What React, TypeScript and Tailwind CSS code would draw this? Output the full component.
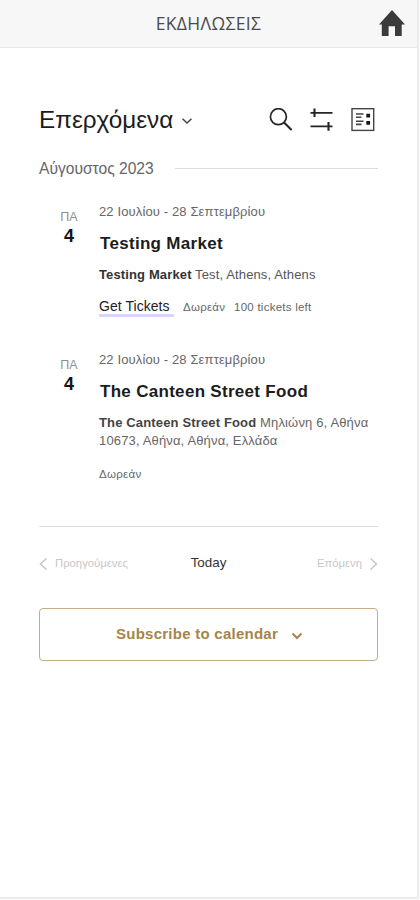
import React from 'react';

function Chevron({ className, d, width = 1.5 }: { className: string; d: string; width?: number }) {
  return (
    <svg className={className} viewBox="0 0 12 12" fill="none" stroke="currentColor" strokeWidth={width}>
      <path d={d} />
    </svg>
  );
}

function DateTag() {
  return (
    <div className="w-[60px] shrink-0 pt-[6px] text-center">
      <div className="h-[16px] text-[12.5px] leading-[16px] text-[#8f8f8f]">ΠΑ</div>
      <div className="h-[22px] text-[18px] font-bold leading-[22px] text-[#141414]">4</div>
    </div>
  );
}

function EventItem({ title, children }: { title: string; children: React.ReactNode }) {
  return (
    <article className="flex">
      <DateTag />
      <div className="whitespace-nowrap">
        <div className="h-[18px] text-[13px] leading-[18px] tracking-[0.13px] text-[#666]">
          22 Ιουλίου - 28 Σεπτεμβρίου
        </div>
        <h3 className="mt-[11px] h-[24px] pl-px text-[17px] font-bold leading-[24px] tracking-[0.3px] text-[#1c1c1c]">
          {title}
        </h3>
        {children}
      </div>
    </article>
  );
}

export default function App() {
  return (
    <div className="flex h-[900px] w-[420px] flex-col bg-[#fdfdfd] font-['Liberation_Sans',Arial,sans-serif]">
      <div className="flex h-[899px] w-[419px] flex-col border-b-2 border-r-2 border-[#ebebeb] bg-white">
        <header className="flex h-[48px] shrink-0 items-center justify-between border-b border-[#e9e9e9] bg-[#f7f7f7] pb-[2px] pr-[12px]">
          <div className="w-[26px]" />
          <h1 className="pl-[12px] pt-[2px] font-['Open_Sans','Noto_Sans',sans-serif] text-[17.5px] tracking-[0.35px] text-[#4a4a4a]">
            ΕΚΔΗΛΩΣΕΙΣ
          </h1>
          <svg className="h-[26px] w-[26px]" viewBox="0 0 26 26" fill="#3b3b3b">
            <path d="M13 0L26 14.5H22.7V26H16V16.2H9.6V26H2.8V14.5H0Z" />
          </svg>
        </header>

        <main className="flex flex-col pl-[39px] pr-[39px] pt-[54px]">
          <div className="flex h-[36px] items-center">
            <h2 className="text-[24.3px] leading-[36px] text-[#1c1c1c]">Επερχόμενα</h2>
            <Chevron className="ml-[8px] mt-[1px] h-[12px] w-[12px] text-[#444]" d="M1.5 3.8L6 8L10.5 3.8" />
            <div className="ml-auto flex items-center gap-[17px] pr-[3px]">
              <svg className="h-[24px] w-[24px]" viewBox="0 0 24 24" fill="none" stroke="#252525" strokeWidth="1.7">
                <circle cx="9.4" cy="8.7" r="8" />
                <path d="M15 14.6L22.6 22" strokeWidth="2.1" />
              </svg>
              <svg className="h-[24px] w-[24px]" viewBox="0 0 24 24" fill="none" stroke="#252525">
                <path d="M.5 4.8H22.5M.5 18.3H22.5" strokeWidth="1.7" />
                <path d="M4.5 .5V9M18.5 14V22.8" strokeWidth="2.1" />
              </svg>
              <svg className="h-[24px] w-[24px]" viewBox="0 0 24 24" fill="none" stroke="#444">
                <rect x="1" y=".7" width="21.7" height="21.7" strokeWidth="1.4" />
                <path d="M5 6H12.5M5 9.2H10.5M5 13.2H12.5M5 16.4H10.5" strokeWidth="1.6" />
                <path d="M15.3 5.8h3.8v3.8h-3.8zM15.3 13h3.8v3.8h-3.8z" fill="#171717" stroke="none" />
              </svg>
            </div>
          </div>

          <div className="mt-[20px] flex h-[20px] items-center">
            <span className="whitespace-nowrap pt-px text-[15.6px] leading-[20px] text-[#666]">Αύγουστος 2023</span>
            <div className="ml-[21px] h-px flex-1 bg-[#ddd]" />
          </div>

          <div className="mt-[25px] h-[148px]">
            <EventItem title="Testing Market">
              <p className="mt-[10px] text-[13px] leading-[18px] tracking-[0.13px] text-[#555]">
                <b className="text-[#333]">Testing Market</b> Test, Athens, Athens
              </p>
              <div className="mt-[13px] flex h-[20px] items-center text-[11.5px] tracking-[0.25px] text-[#666]">
                <a className="h-[20px] w-[75px] border-b-[3px] border-[#dad4fa] text-[14px] leading-[19px] tracking-[0.05px] text-[#222]">
                  Get Tickets
                </a>
                <span className="ml-[9px] w-[51px] pt-px">Δωρεάν</span>
                <span className="pt-px">100 tickets left</span>
              </div>
            </EventItem>
          </div>
          <div className="h-[175px]">
            <EventItem title="The Canteen Street Food">
              <p className="mt-[10px] text-[13px] leading-[18px] tracking-[0.15px] text-[#666]">
                <b className="text-[#444]">The Canteen Street Food</b> Μηλιώνη 6, Αθήνα
                <br />
                10673, Αθήνα, Αθήνα, Ελλάδα
              </p>
              <div className="mt-[15px] text-[11.5px] leading-[18px] tracking-[0.3px] text-[#666]">Δωρεάν</div>
            </EventItem>
          </div>

          <nav className="flex h-[82px] items-center justify-between border-t border-[#ddd] pb-[8px] text-[11.3px] text-[#c7c7c7]">
            <span className="flex w-[120px] items-center gap-[5px]">
              <Chevron className="-ml-px h-[12px] w-[12px]" d="M8.5 .5L2.5 6L8.5 11.5" />
              Προηγούμενες
            </span>
            <span className="text-[13.4px] text-[#333]">Today</span>
            <span className="flex w-[120px] items-center justify-end gap-[4px]">
              Επόμενη
              <Chevron className="h-[12px] w-[12px]" d="M4.5 .5L10.5 6L4.5 11.5" />
            </span>
          </nav>

          <button className="flex h-[53px] items-center justify-center rounded-[4px] border-[1.5px] border-[#c2ad85] pl-[2px] text-[15px] font-bold tracking-[0.25px] text-[#a5854b]">
            Subscribe to calendar
            <Chevron className="ml-[13px] mt-[2px] h-[12px] w-[12px]" d="M1.5 3.5L6 8L10.5 3.5" width={2} />
          </button>
        </main>
      </div>
    </div>
  );
}
